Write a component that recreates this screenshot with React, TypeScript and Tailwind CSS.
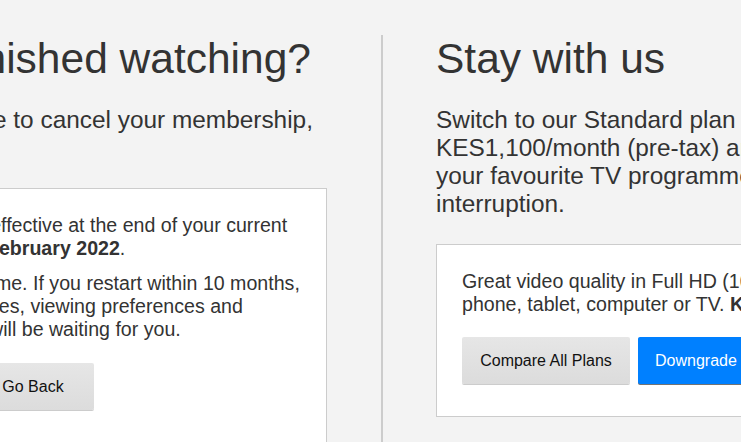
import React from 'react';

function GrayButton({ children, className = '' }: { children: React.ReactNode; className?: string }) {
  return (
    <button
      type="button"
      className={`flex h-[47px] shrink-0 items-center justify-center rounded-[2px] bg-linear-to-b from-[#e6e6e6] to-[#dcdcdc] text-[16px] text-[#111] shadow-[0_1px_0_rgba(0,0,0,0.2)] ${className}`}
    >
      {children}
    </button>
  );
}

function BlueButton({ children, className = '' }: { children: React.ReactNode; className?: string }) {
  return (
    <button
      type="button"
      className={`flex h-[47px] shrink-0 items-center justify-center rounded-[2px] bg-[#0080ff] text-[16px] text-white shadow-[0_1px_0_rgba(0,0,0,0.55)] ${className}`}
    >
      {children}
    </button>
  );
}

export default function App() {
  return (
    <div className="h-[442px] overflow-hidden bg-[#f3f3f3] font-['Liberation_Sans',Arial,sans-serif] text-[#333]">
      <div className="ml-[-209px] flex h-full items-stretch pt-[35px]">
        {/* cancel column */}
        <section className="w-[536px] shrink-0">
          <h1 className="ml-[12px] whitespace-nowrap text-[42.5px] leading-[48px]">Are you finished watching?</h1>
          <p className="mt-[23px] whitespace-nowrap text-[24.4px] leading-[28px]">
            If you would still like to cancel your membership,
            <br />
            click below.
          </p>
          <div className="mt-[26px] whitespace-nowrap border border-[#ccc] bg-white px-[25px] pb-[32px] pt-[25px] text-[19.6px] leading-[23px]">
            <p>
              Cancellation will be effective at the end of your current
              <br />
              billing period on <strong>26 February 2022</strong>.
            </p>
            <p className="mt-[12px]">
              You can restart anytime. If you restart within 10 months,
              <br />
              your profiles, favourites, viewing preferences and
              <br />
              subscription details will be waiting for you.
            </p>
            <div className="mt-[22px] flex gap-[8px]">
              <BlueButton className="w-[147px]">Finish Cancellation</BlueButton>
              <GrayButton className="w-[122px]">Go Back</GrayButton>
            </div>
          </div>
        </section>

        <div className="ml-[54px] w-[2px] shrink-0 bg-[#ccc]" />

        {/* downgrade offer */}
        <section className="w-[760px] shrink-0 pl-[53px]">
          <h1 className="whitespace-nowrap text-[42.5px] leading-[48px]">Stay with us</h1>
          <p className="mt-[23px] whitespace-nowrap text-[24.4px] leading-[28px]">
            Switch to our Standard plan for
            <br />
            KES1,100/month (pre-tax) and keep watching
            <br />
            your favourite TV programmes and films without
            <br />
            interruption.
          </p>
          <div className="mt-[26px] whitespace-nowrap border border-[#ccc] bg-white px-[25px] pb-[32px] pt-[25px] text-[19.6px] leading-[23px]">
            <p>
              Great video quality in Full HD (1080p). Watch on any
              <br />
              phone, tablet, computer or TV. <strong>KES1,100/month</strong>
            </p>
            <div className="mt-[21px] flex gap-[8px]">
              <GrayButton className="w-[168px]">Compare All Plans</GrayButton>
              <BlueButton className="px-[17px]">Downgrade to Standard</BlueButton>
            </div>
          </div>
        </section>
      </div>
    </div>
  );
}
